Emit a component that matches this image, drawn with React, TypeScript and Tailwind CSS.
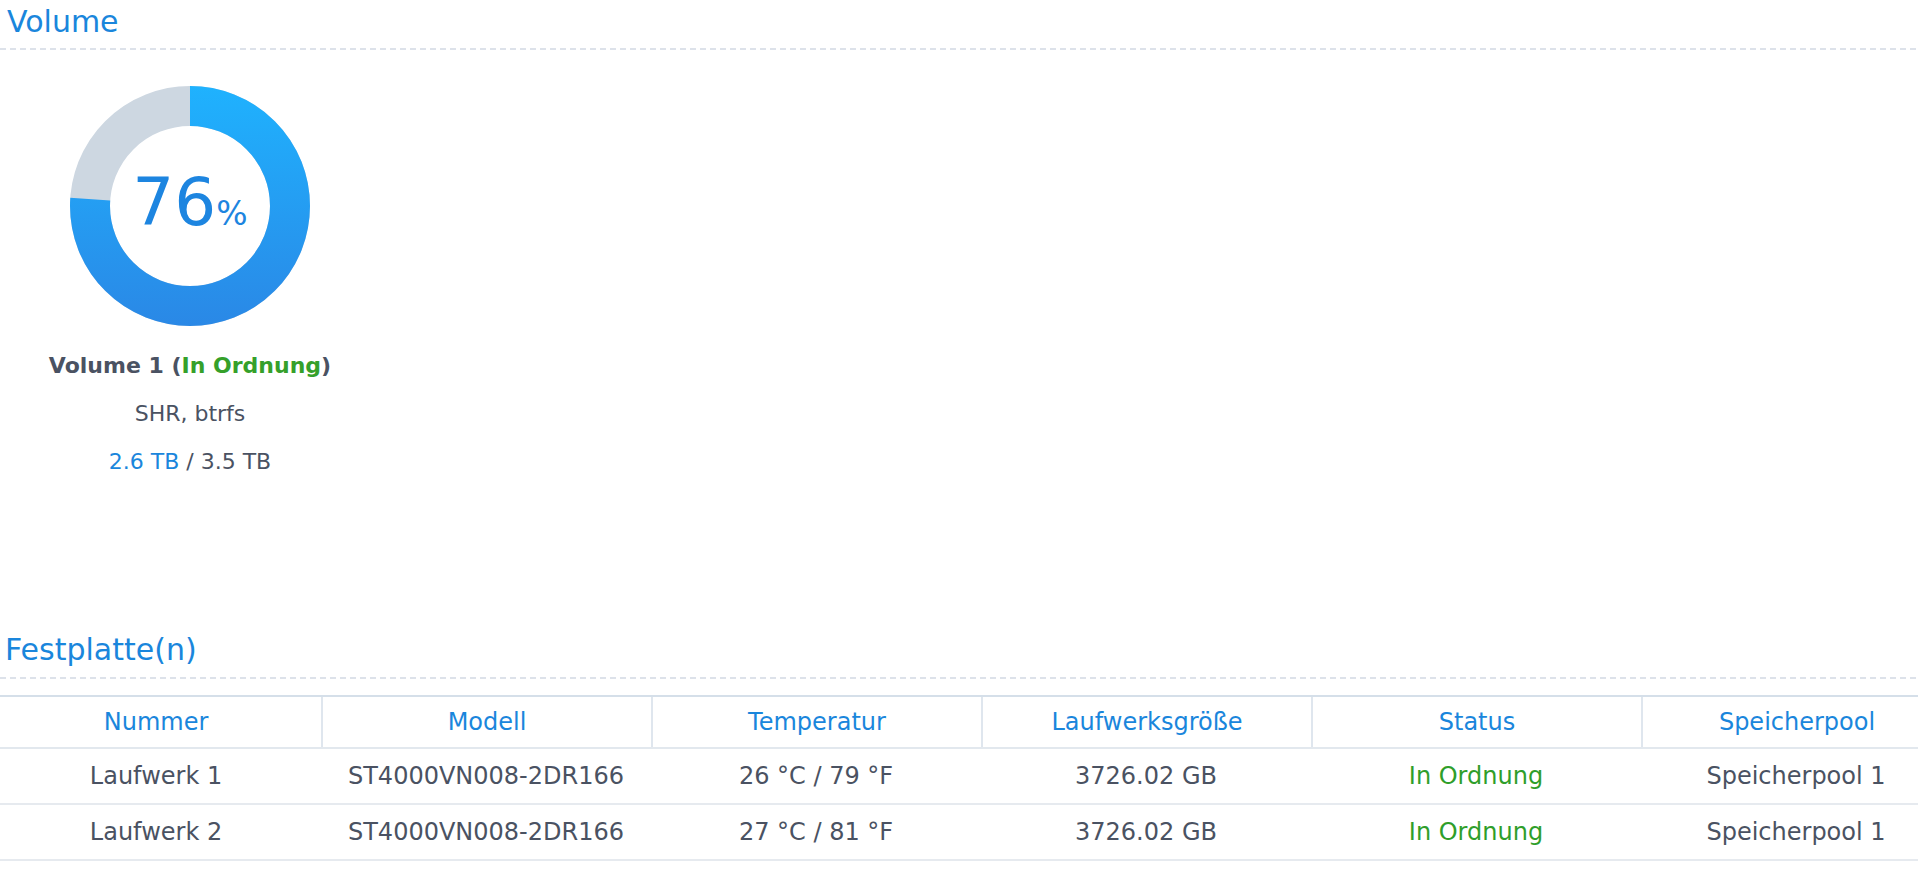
import React from 'react'

interface Disk {
  name: string
  model: string
  temp: string
  size: string
  status: string
  pool: string
}

const disks: Disk[] = [
  { name: 'Laufwerk 1', model: 'ST4000VN008-2DR166', temp: '26 °C / 79 °F', size: '3726.02 GB', status: 'In Ordnung', pool: 'Speicherpool 1' },
  { name: 'Laufwerk 2', model: 'ST4000VN008-2DR166', temp: '27 °C / 81 °F', size: '3726.02 GB', status: 'In Ordnung', pool: 'Speicherpool 1' },
]

const columns = ['Nummer', 'Modell', 'Temperatur', 'Laufwerksgröße', 'Status', 'Speicherpool']

// gestrichelte Trennlinie unter den Überschriften
const DashedLine = ({ className = '' }: { className?: string }) => (
  <div
    className={`h-[2px] w-full bg-[repeating-linear-gradient(to_right,#dde2ea_0px,#dde2ea_6px,transparent_6px,transparent_10px)] ${className}`}
  />
)

const Donut = ({ percent }: { percent: number }) => {
  const r = 100
  const c = 2 * Math.PI * r
  const used = (c * percent) / 100
  return (
    <div className="relative h-[240px] w-[240px]">
      <svg width="240" height="240" viewBox="0 0 240 240">
        <defs>
          <linearGradient id="usedGrad" x1="0" y1="0" x2="0" y2="240" gradientUnits="userSpaceOnUse">
            <stop offset="0" stopColor="#1fb2fe" />
            <stop offset="1" stopColor="#2a88e6" />
          </linearGradient>
        </defs>
        <circle cx="120" cy="120" r={r} fill="none" stroke="#cdd7e1" strokeWidth="40" />
        {/* Start oben, im Uhrzeigersinn */}
        <path
          d="M120,20 a100,100 0 1,1 0,200 a100,100 0 1,1 0,-200"
          fill="none"
          stroke="url(#usedGrad)"
          strokeWidth="40"
          strokeDasharray={`${used} ${c}`}
        />
      </svg>
      <div className="absolute inset-0 flex items-center justify-center">
        <div className="flex -translate-y-[3px] items-baseline text-[#1d85e0]">
          <span className="text-[66px] leading-none">{percent}</span>
          <span className="text-[33px] leading-none">%</span>
        </div>
      </div>
    </div>
  )
}

const App: React.FC = () => {
  return (
    <div className="min-h-screen w-full overflow-hidden bg-white font-['DejaVu_Sans',Verdana,sans-serif]">
      {/* Volume */}
      <div className="pl-[7px] pt-[4px] text-[30px] leading-[36px] text-[#1a86dc]">Volume</div>
      <DashedLine className="mt-[8px]" />

      <div className="mt-[36px] flex w-[380px] flex-col items-center">
        <Donut percent={76} />
        <div className="mt-[16px] text-center text-[22px] leading-[48px] text-[#4a5262]">
          <div className="font-bold">
            Volume 1 (<span className="text-[#35a02a]">In Ordnung</span>)
          </div>
          <div>SHR, btrfs</div>
          <div>
            <span className="text-[#1a86dc]">2.6 TB</span> / 3.5 TB
          </div>
        </div>
      </div>

      {/* Festplatte(n) */}
      <div className="mt-[146px] pl-[5px] text-[30px] leading-[36px] text-[#1a86dc]">Festplatte(n)</div>
      <DashedLine className="mt-[9px]" />

      <div className="ml-[-9px] mt-[16px] w-[1960px] text-[24px]">
        <div className="grid grid-cols-[330px_330px_330px_330px_330px_310px] border-y-2 border-t-[#d5dfe9] border-b-[#e2e8ee]">
          {columns.map((col, i) => (
            <div
              key={col}
              className={`flex h-[50px] items-center justify-center text-[#1a86dc] ${i > 0 ? 'border-l-2 border-[#dfe6ee]' : ''}`}
            >
              {col}
            </div>
          ))}
        </div>
        {disks.map((d) => (
          <div
            key={d.name}
            className="grid grid-cols-[330px_330px_330px_330px_330px_310px] border-b-2 border-[#e6eaef] text-[#4a5262]"
          >
            <div className="flex h-[54px] items-center justify-center">{d.name}</div>
            <div className="flex h-[54px] items-center justify-center">{d.model}</div>
            <div className="flex h-[54px] items-center justify-center">{d.temp}</div>
            <div className="flex h-[54px] items-center justify-center">{d.size}</div>
            <div className="flex h-[54px] items-center justify-center text-[#2f9e2a]">{d.status}</div>
            <div className="flex h-[54px] items-center justify-center">{d.pool}</div>
          </div>
        ))}
      </div>
    </div>
  )
}

export default App
